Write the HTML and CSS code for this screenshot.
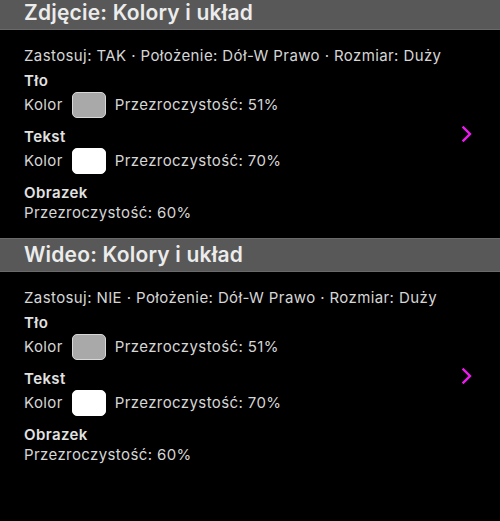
FILE: index.html
```html
<!DOCTYPE html>
<html lang="pl">
<head>
<meta charset="utf-8">
<link rel="stylesheet" href="styles.css">
</head>
<body>
<div class="page">
  <section class="section">
    <div class="header">Zdjęcie: Kolory i układ</div>
    <div class="content">
      <div class="details">
        <div class="summary">Zastosuj: TAK · Położenie: Dół-W Prawo · Rozmiar: Duży</div>
        <div class="group">
          <div class="title">Tło</div>
          <div class="row"><span>Kolor</span><span class="swatch swatch-gray"></span><span>Przezroczystość: 51%</span></div>
        </div>
        <div class="group">
          <div class="title">Tekst</div>
          <div class="row"><span>Kolor</span><span class="swatch swatch-white"></span><span>Przezroczystość: 70%</span></div>
        </div>
        <div class="group">
          <div class="title">Obrazek</div>
          <div class="line">Przezroczystość: 60%</div>
        </div>
      </div>
      <svg class="chevron" width="10" height="16" viewBox="0 0 10 16"><path d="M1.5 1.5 L8 8 L1.5 14.5" fill="none" stroke="#f01af0" stroke-width="2.4" stroke-linecap="square" stroke-linejoin="miter"/></svg>
    </div>
  </section>
  <section class="section">
    <div class="header">Wideo: Kolory i układ</div>
    <div class="content">
      <div class="details">
        <div class="summary">Zastosuj: NIE · Położenie: Dół-W Prawo · Rozmiar: Duży</div>
        <div class="group">
          <div class="title">Tło</div>
          <div class="row"><span>Kolor</span><span class="swatch swatch-gray"></span><span>Przezroczystość: 51%</span></div>
        </div>
        <div class="group">
          <div class="title">Tekst</div>
          <div class="row"><span>Kolor</span><span class="swatch swatch-white"></span><span>Przezroczystość: 70%</span></div>
        </div>
        <div class="group">
          <div class="title">Obrazek</div>
          <div class="line">Przezroczystość: 60%</div>
        </div>
      </div>
      <svg class="chevron" width="10" height="16" viewBox="0 0 10 16"><path d="M1.5 1.5 L8 8 L1.5 14.5" fill="none" stroke="#f01af0" stroke-width="2.4" stroke-linecap="square" stroke-linejoin="miter"/></svg>
    </div>
  </section>
</div>
</body>
</html>
```

FILE: styles.css
```css
html, body {
  margin: 0;
  padding: 0;
  background: #000;
}
body {
  font-family: Inter, "Liberation Sans", sans-serif;
  color: #d6d6d6;
  overflow: hidden;
}
.page {
  margin-top: -4px;
}
.header {
  height: 32px;
  border-top: 1px solid #6a6a6a;
  border-bottom: 1px solid #6a6a6a;
  background: #585858;
  color: #ececec;
  font-size: 21px;
  font-weight: 600;
  letter-spacing: 0.2px;
  line-height: 32px;
  padding-left: 24px;
}
.content {
  display: flex;
  align-items: center;
  height: 208px;
}
.details {
  flex: 1;
  padding: 16px 0 15px 24px;
  display: flex;
  flex-direction: column;
  font-size: 15px;
  letter-spacing: 0.4px;
  line-height: 20px;
}
.summary {
  margin-bottom: 5px;
}
.group + .group {
  margin-top: 9px;
}
.title {
  font-weight: 600;
  color: #e2e2e2;
}
.row {
  display: flex;
  align-items: center;
  gap: 9px;
  height: 26px;
  margin-top: 1px;
}
.swatch {
  width: 32px;
  height: 24px;
  border: 1px solid #d8d8d8;
  border-radius: 5px;
}
.swatch-gray {
  background: #a9a9a9;
}
.swatch-white {
  background: #ffffff;
  border-color: #ffffff;
}
.chevron {
  margin-right: 28px;
}
```
